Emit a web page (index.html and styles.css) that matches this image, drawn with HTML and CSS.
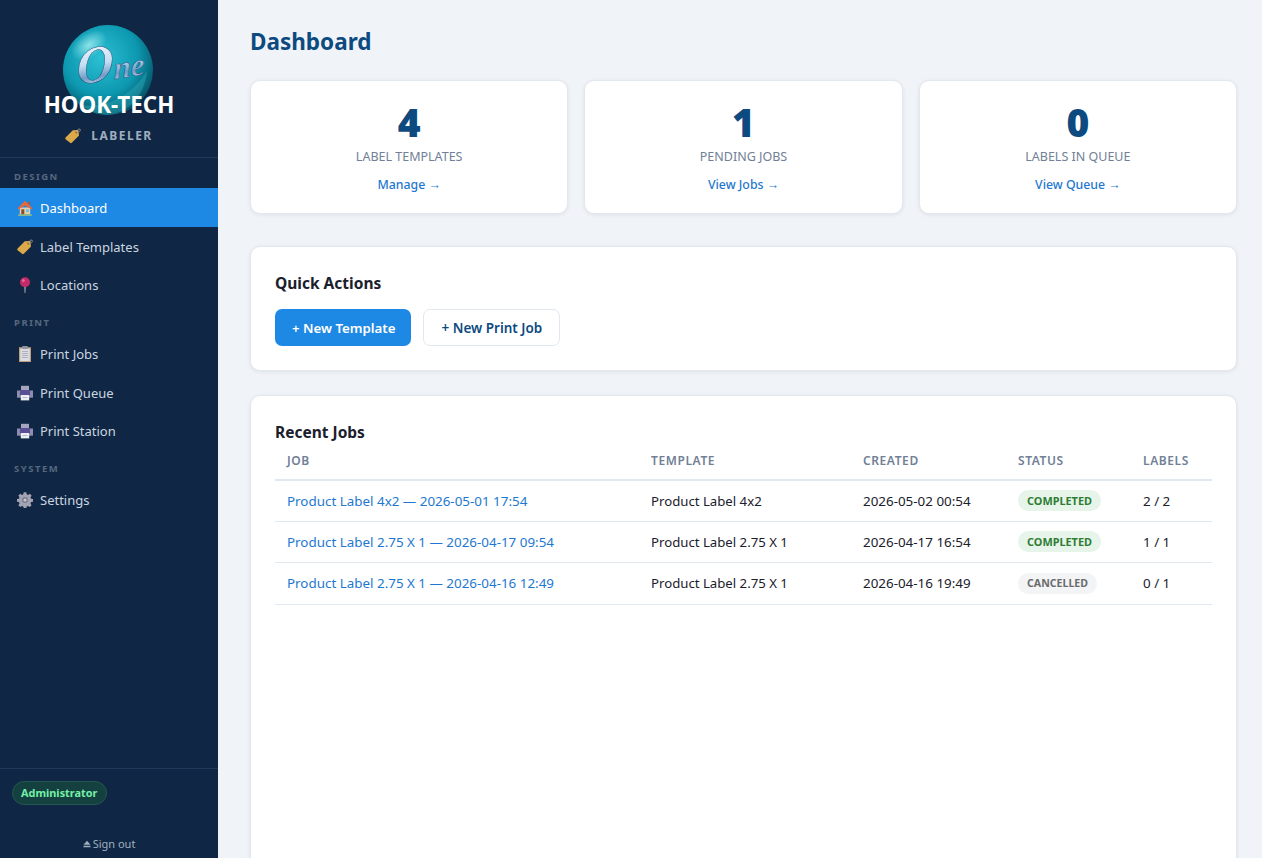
FILE: index.html
```html
<!DOCTYPE html>
<html lang="en">

<head>
    <meta charset="UTF-8">
    <meta name="viewport" content="width=device-width, initial-scale=1.0">
    <title>Dashboard</title>
    <link rel="stylesheet" href="styles.css">
</head>

<body>
    <svg class="defs" width="0" height="0">
        <defs>
            <symbol id="ico-house" viewBox="0 0 16 16">
                <path d="M11.300 1.500h1.700v4h-1.700z" fill="#a65a3a"/>
                <path d="M2.800 7.500h10.400v7H2.800z" fill="#e6cfa8"/>
                <path d="M8 .8 .4 8.500l.9.900L8 5.400l6.700 4 .9-.9z" fill="#e8683a"/>
                <path d="M4.300 9.300h3v5.200h-3z" fill="#8a4a30"/>
                <path d="M9 9.300h3v2.800H9z" fill="#5fc4e8"/>
                <path d="M1.200 14.300h13.600V16H1.200z" fill="#86b98a"/>
            </symbol>
            <symbol id="ico-tag" viewBox="0 0 16 16">
                <path d="M.6 9.600 7.800 2.200 13.400 2l.6 5.400-7.200 7.400c-.5.500-1.200.5-1.700 0L.6 11.300c-.5-.5-.5-1.200 0-1.700z" fill="#dca94a"/>
                <circle cx="11.300" cy="4.600" r="1" fill="#6e5a3a"/>
                <path d="M11.300 4.600C11.800 2.400 13.200 .4 15 1.200c.8.600.4 2-.9 2.800" fill="none" stroke="#b5b0a6" stroke-width=".7"/>
            </symbol>
            <symbol id="ico-pin" viewBox="0 0 16 16">
                <circle cx="8" cy="5.200" r="5" fill="#c22a68"/>
                <circle cx="6.300" cy="3.500" r="1.500" fill="#e66a9c"/>
                <path d="M7.300 10h1.400l-.3 6h-.8z" fill="#a5adba"/>
            </symbol>
            <symbol id="ico-clip" viewBox="0 0 16 16">
                <path d="M2 1.200h12V16H2z" fill="#c09a7c"/>
                <path d="M3.200 2.600h9.600V15H3.200z" fill="#dcdde2"/>
                <path d="M5.300 0h5.400v3H5.300z" fill="#8d97a3"/>
                <path d="M5 5.500h6M5 7.500h6M5 9.500h6M5 11.500h6" stroke="#a0a6b0" stroke-width=".8"/>
            </symbol>
            <symbol id="ico-printer" viewBox="0 0 16 16">
                <path d="M4 .8h8v5H4z" fill="#a5a5bd"/>
                <path d="M0 5.500h16v7.200H0z" fill="#8c8cae"/>
                <path d="M3 5h10v6H3z" fill="#5a4f96"/>
                <path d="M3.800 10h8.400v5.400H3.800z" fill="#eceef2"/>
                <path d="M5.500 12h5v1h-5z" fill="#b9bccb"/>
            </symbol>
            <symbol id="ico-gear" viewBox="0 0 16 16">
                <path d="M6.700.3h2.600l.4 2 1.300.6 1.800-1.100 1.800 1.800-1.100 1.800.6 1.300 2 .4v2.600l-2 .4-.6 1.300 1.100 1.800-1.800 1.800-1.800-1.100-1.300.6-.4 2H6.700l-.4-2-1.300-.6-1.800 1.100-1.800-1.800 1.100-1.800-.6-1.300-2-.4V7.100l2-.4.6-1.300-1.100-1.800 1.800-1.800 1.800 1.100 1.300-.6z" fill="#a3a3b2"/>
                <circle cx="8" cy="8" r="3" fill="#7d7d90"/>
                <circle cx="8" cy="8" r="1.500" fill="#c8c8d2"/>
            </symbol>
        </defs>
    </svg>

    <div class="layout">
        <!-- sidebar -->
        <aside class="sidebar">
            <div class="brand">
                <svg class="logo" viewBox="0 0 90 90" width="90" height="90">
                    <defs>
                        <radialGradient id="ball" cx="42%" cy="36%" r="64%">
                            <stop offset="0" stop-color="#2cc0d4"/>
                            <stop offset=".65" stop-color="#0c98b0"/>
                            <stop offset="1" stop-color="#06566a"/>
                        </radialGradient>
                        <radialGradient id="shine" cx="50%" cy="50%" r="50%">
                            <stop offset="0" stop-color="#a8f0f2" stop-opacity=".8"/>
                            <stop offset="1" stop-color="#a8f0f2" stop-opacity="0"/>
                        </radialGradient>
                        <linearGradient id="chrome" x1="0" y1="0" x2="0" y2="1">
                            <stop offset="0" stop-color="#ffffff"/>
                            <stop offset=".5" stop-color="#c4dcf2"/>
                            <stop offset=".72" stop-color="#6f9cc6"/>
                            <stop offset="1" stop-color="#ffffff"/>
                        </linearGradient>
                    </defs>
                    <circle cx="45" cy="45" r="45" fill="url(#ball)"/>
                    <ellipse cx="26" cy="20" rx="20" ry="12" fill="url(#shine)" transform="rotate(-35 26 20)"/>
                    <path d="M18 80c24 4 50-8 66-34-2 24-18 42-39 44-11 0-20-4-27-10z" fill="#40c6d2" opacity=".3"/>
                    <text class="logo-text" transform="translate(14 60) rotate(-9) skewX(-8)" fill="url(#chrome)" stroke="#24527c" stroke-width=".5"><tspan class="logo-cap">O</tspan>ne</text>
                </svg>
                <div class="brand-name">HOOK-TECH</div>
                <div class="brand-sub">
                    <svg class="ico"><use href="#ico-tag"/></svg>
                    <span>LABELER</span>
                </div>
            </div>

            <nav class="nav">
                <div class="nav-section">DESIGN</div>
                <a class="nav-item active"><svg class="ico"><use href="#ico-house"/></svg>Dashboard</a>
                <a class="nav-item"><svg class="ico"><use href="#ico-tag"/></svg>Label Templates</a>
                <a class="nav-item"><svg class="ico"><use href="#ico-pin"/></svg>Locations</a>
                <div class="nav-section">PRINT</div>
                <a class="nav-item"><svg class="ico"><use href="#ico-clip"/></svg>Print Jobs</a>
                <a class="nav-item"><svg class="ico"><use href="#ico-printer"/></svg>Print Queue</a>
                <a class="nav-item"><svg class="ico"><use href="#ico-printer"/></svg>Print Station</a>
                <div class="nav-section">SYSTEM</div>
                <a class="nav-item"><svg class="ico"><use href="#ico-gear"/></svg>Settings</a>
            </nav>

            <div class="sidebar-footer">
                <span class="role-badge">Administrator</span>
                <a class="signout"><svg class="eject" viewBox="0 0 8 8" width="8" height="8"><path d="M4 .8 7.500 4.800H.5zM.5 5.800h7v1.500h-7z"/></svg>Sign out</a>
            </div>
        </aside>

        <!-- main -->
        <main class="main">
            <h1 class="page-title">Dashboard</h1>

            <div class="stats">
                <div class="stat-card">
                    <div class="stat-value">4</div>
                    <div class="stat-label">LABEL TEMPLATES</div>
                    <a class="stat-link">Manage <span class="arrow">→</span></a>
                </div>
                <div class="stat-card">
                    <div class="stat-value">1</div>
                    <div class="stat-label">PENDING JOBS</div>
                    <a class="stat-link">View Jobs <span class="arrow">→</span></a>
                </div>
                <div class="stat-card">
                    <div class="stat-value">0</div>
                    <div class="stat-label">LABELS IN QUEUE</div>
                    <a class="stat-link">View Queue <span class="arrow">→</span></a>
                </div>
            </div>

            <section class="card quick">
                <h2 class="card-title">Quick Actions</h2>
                <div class="actions">
                    <a class="btn btn-primary">+ New Template</a>
                    <a class="btn btn-outline">+ New Print Job</a>
                </div>
            </section>

            <section class="card recent">
                <h2 class="card-title">Recent Jobs</h2>
                <table class="jobs">
                    <thead>
                        <tr>
                            <th class="col-job">JOB</th>
                            <th class="col-template">TEMPLATE</th>
                            <th class="col-created">CREATED</th>
                            <th class="col-status">STATUS</th>
                            <th>LABELS</th>
                        </tr>
                    </thead>
                    <tbody>
                        <tr>
                            <td><a class="job-link">Product Label 4x2 — 2026-05-01 17:54</a></td>
                            <td>Product Label 4x2</td>
                            <td class="date">2026-05-02 00:54</td>
                            <td><span class="status status-done">COMPLETED</span></td>
                            <td class="date">2 / 2</td>
                        </tr>
                        <tr>
                            <td><a class="job-link">Product Label 2.75 X 1 — 2026-04-17 09:54</a></td>
                            <td>Product Label 2.75 X 1</td>
                            <td class="date">2026-04-17 16:54</td>
                            <td><span class="status status-done">COMPLETED</span></td>
                            <td class="date">1 / 1</td>
                        </tr>
                        <tr>
                            <td><a class="job-link">Product Label 2.75 X 1 — 2026-04-16 12:49</a></td>
                            <td>Product Label 2.75 X 1</td>
                            <td class="date">2026-04-16 19:49</td>
                            <td><span class="status status-off">CANCELLED</span></td>
                            <td class="date">0 / 1</td>
                        </tr>
                    </tbody>
                </table>
            </section>
        </main>
    </div>
</body>

</html>
```

FILE: styles.css
```css
* {
    box-sizing: border-box;
}

html,
body {
    height: 100%;
    margin: 0;
    overflow: hidden;
}

body {
    background-color: #f0f4f8;
    color: #1a202c;
    font-family: "Noto Sans", "Open Sans", sans-serif;
    font-size: 13px;
}

.defs {
    position: absolute;
}

.layout {
    display: flex;
    height: 858px;
}

.ico {
    width: 16px;
    height: 16px;
    flex: none;
}

/* sidebar */
.sidebar {
    width: 218px;
    flex: none;
    display: flex;
    flex-direction: column;
    background-color: #0f2744;
}

.brand {
    height: 157.500px;
    padding-top: 25px;
    display: flex;
    flex-direction: column;
    align-items: center;
    border-bottom: 1px solid #24395a;
}

.logo {
    display: block;
    margin-left: -3px;
}

.logo-text {
    font-family: "Liberation Serif", serif;
    font-style: italic;
    font-weight: 700;
    font-size: 31px;
}

.logo-cap {
    font-size: 52px;
}

.brand-name {
    margin-top: -24px;
    position: relative;
    color: #fff;
    font-size: 22.400px;
    line-height: 28px;
    font-weight: 700;
}

.brand-sub {
    margin-top: 8px;
    display: flex;
    align-items: center;
    gap: 10px;
    color: #a0aec0;
    font-size: 12px;
    font-weight: 700;
    letter-spacing: 1.500px;
}

.nav {
    flex: 1;
}

.nav-section {
    height: 30.500px;
    padding: 13px 14px 0;
    color: #56687f;
    font-size: 9.500px;
    line-height: 12px;
    font-weight: 700;
    letter-spacing: 1.500px;
}

.nav-item {
    height: 38.500px;
    padding-left: 17px;
    padding-top: 1.500px;
    display: flex;
    align-items: center;
    gap: 7px;
    color: #cbd5e0;
    font-size: 13px;
}

.nav-item.active {
    background-color: #1e88e5;
    color: #fff;
}

.sidebar-footer {
    height: 90px;
    padding: 12px 12px 0;
    border-top: 1px solid #24395a;
    display: flex;
    flex-direction: column;
    align-items: flex-start;
}

.role-badge {
    height: 24px;
    padding: 0 9px 0 8px;
    border: 1px solid #22584f;
    border-radius: 12px;
    background-color: #14403f;
    color: #74f0a8;
    font-size: 10.900px;
    line-height: 22px;
    font-weight: 700;
}

.signout {
    margin-top: 31px;
    align-self: center;
    display: flex;
    align-items: center;
    gap: 2px;
    color: #a0aec0;
    font-size: 11px;
    line-height: 16px;
}

.eject {
    fill: #a0aec0;
}

/* main */
.main {
    flex: 1;
    min-width: 0;
    padding: 25px 25px 0 32px;
}

.page-title {
    margin: 0 0 21px;
    color: #0d4a80;
    font-size: 22.500px;
    line-height: 34px;
    font-weight: 700;
}

.stats {
    display: grid;
    grid-template-columns: repeat(3, 1fr);
    gap: 16px;
    margin-bottom: 32px;
}

.stat-card,
.card {
    background-color: #fff;
    border: 1px solid #e2e8f0;
    border-radius: 10px;
    box-shadow: 0 1px 4px rgba(0, 0, 0, 0.08);
}

.stat-card {
    height: 134px;
    padding-top: 16px;
    text-align: center;
}

.stat-value {
    color: #0d4a80;
    font-size: 39px;
    line-height: 50px;
    font-weight: 900;
}

.stat-label {
    margin-top: 2px;
    color: #718096;
    font-size: 12.500px;
    line-height: 16px;
}

.stat-link {
    display: block;
    margin-top: 12px;
    color: #1e78d0;
    font-size: 12.300px;
    line-height: 16px;
    font-weight: 500;
}

.arrow {
    font-family: "Liberation Sans", sans-serif;
}

.card {
    padding: 24px;
}

.quick {
    height: 125px;
    margin-bottom: 24px;
}

.recent {
    height: 520px;
}

.card-title {
    margin: 0;
    color: #1a202c;
    font-size: 15.500px;
    line-height: 24px;
    font-weight: 700;
}

.actions {
    display: flex;
    gap: 12px;
    margin-top: 14px;
}

.btn {
    height: 37px;
    font-weight: 600;
}

.btn-primary {
    padding: 0 16px 0 17px;
    border-radius: 7px;
    background-color: #1e88e5;
    color: #fff;
    font-size: 13.250px;
    line-height: 38px;
}

.btn-outline {
    padding: 0 17px;
    border: 1px solid #e2e8f0;
    border-radius: 7px;
    background-color: #fff;
    color: #0d4a80;
    font-size: 13.500px;
    line-height: 36px;
}

/* table */
.jobs {
    width: 100%;
    border-collapse: collapse;
    table-layout: fixed;
}

.jobs th {
    height: 35.500px;
    padding: 0 12px 2px;
    border-bottom: 2px solid #e2e8f0;
    color: #718096;
    font-size: 12px;
    font-weight: 600;
    letter-spacing: 0.600px;
    text-align: left;
}

.col-job {
    width: 364px;
}

.col-template {
    width: 212px;
}

.col-created {
    width: 155px;
}

.col-status {
    width: 125px;
}

.jobs td {
    height: 41.500px;
    padding: 0 12px;
    border-bottom: 1px solid #e2e8f0;
    color: #1a202c;
    font-size: 13.200px;
}

.jobs .date {
    font-size: 13.400px;
}

.job-link {
    color: #1e78d0;
    font-size: 13.400px;
}

.status {
    display: inline-block;
    height: 21px;
    padding: 0 9px;
    border-radius: 11px;
    font-size: 10.900px;
    line-height: 21px;
    font-weight: 700;
    vertical-align: middle;
}

.status-done {
    background-color: #e6f4ea;
    color: #2e7d32;
}

.status-off {
    background-color: #f2f4f6;
    color: #6b6b6b;
    font-size: 10.600px;
}
```
